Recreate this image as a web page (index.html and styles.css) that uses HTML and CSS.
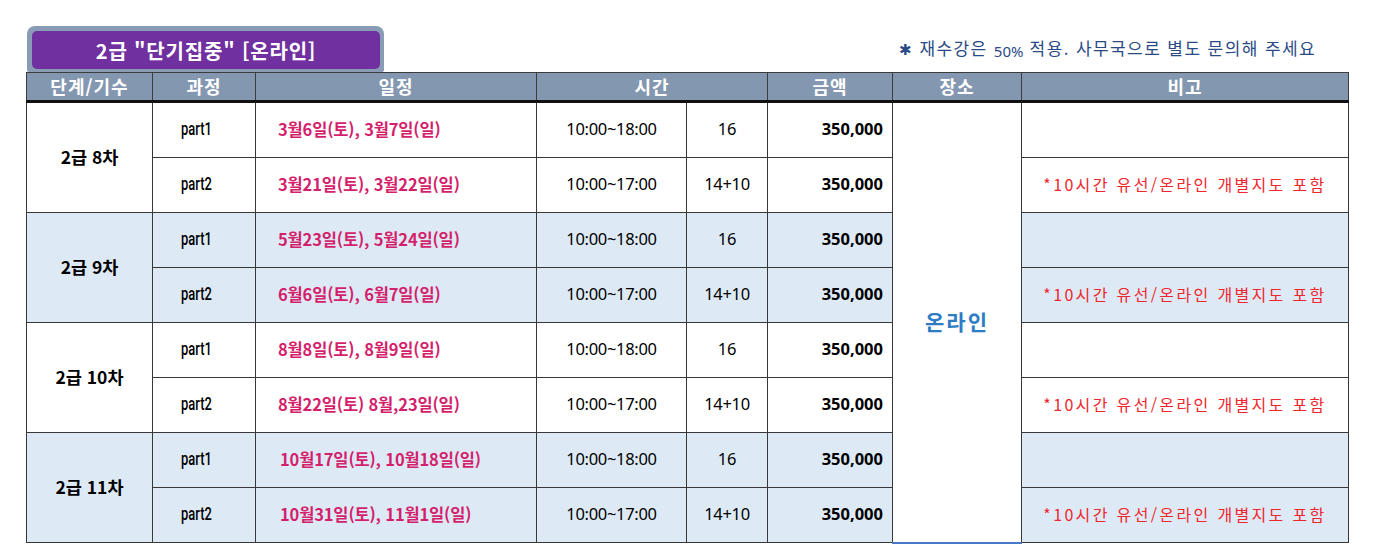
FILE: index.html
```html
<!DOCTYPE html>
<html lang="ko">
<head>
<meta charset="utf-8">
<title>2급 단기집중 온라인</title>
<link rel="stylesheet" href="styles.css">
</head>
<body>
<div class="wrap">
  <div class="topbar">
    <div class="tab"><div class="tab-inner">2급 "단기집중" [온라인]</div></div>
    <div class="note"><span class="star">✱</span> 재수강은 <span class="pct">50%</span> 적용. 사무국으로 별도 문의해 주세요</div>
  </div>
  <table class="sched">
    <colgroup>
      <col class="c1"><col class="c2"><col class="c3"><col class="c4"><col class="c5"><col class="c6"><col class="c7"><col class="c8">
    </colgroup>
    <thead>
      <tr>
        <th>단계/기수</th><th>과정</th><th>일정</th><th colspan="2">시간</th><th>금액</th><th>장소</th><th>비고</th>
      </tr>
    </thead>
    <tbody>
      <tr class="w">
        <td rowspan="2" class="grp">2급 8차</td>
        <td class="part"><span>part1</span></td>
        <td class="date">3월6일(토), 3월7일(일)</td>
        <td class="time">10:00~18:00</td>
        <td class="hrs">16</td>
        <td class="amt">350,000</td>
        <td rowspan="8" class="place">온라인</td>
        <td class="memo"></td>
      </tr>
      <tr class="w">
        <td class="part"><span>part2</span></td>
        <td class="date">3월21일(토), 3월22일(일)</td>
        <td class="time">10:00~17:00</td>
        <td class="hrs">14+10</td>
        <td class="amt">350,000</td>
        <td class="memo">*10시간 유선/온라인 개별지도 포함</td>
      </tr>
      <tr class="b">
        <td rowspan="2" class="grp">2급 9차</td>
        <td class="part"><span>part1</span></td>
        <td class="date">5월23일(토), 5월24일(일)</td>
        <td class="time">10:00~18:00</td>
        <td class="hrs">16</td>
        <td class="amt">350,000</td>
        <td class="memo"></td>
      </tr>
      <tr class="b">
        <td class="part"><span>part2</span></td>
        <td class="date">6월6일(토), 6월7일(일)</td>
        <td class="time">10:00~17:00</td>
        <td class="hrs">14+10</td>
        <td class="amt">350,000</td>
        <td class="memo">*10시간 유선/온라인 개별지도 포함</td>
      </tr>
      <tr class="w">
        <td rowspan="2" class="grp">2급 10차</td>
        <td class="part"><span>part1</span></td>
        <td class="date">8월8일(토), 8월9일(일)</td>
        <td class="time">10:00~18:00</td>
        <td class="hrs">16</td>
        <td class="amt">350,000</td>
        <td class="memo"></td>
      </tr>
      <tr class="w">
        <td class="part"><span>part2</span></td>
        <td class="date">8월22일(토) 8월,23일(일)</td>
        <td class="time">10:00~17:00</td>
        <td class="hrs">14+10</td>
        <td class="amt">350,000</td>
        <td class="memo">*10시간 유선/온라인 개별지도 포함</td>
      </tr>
      <tr class="b">
        <td rowspan="2" class="grp">2급 11차</td>
        <td class="part"><span>part1</span></td>
        <td class="date d2">10월17일(토), 10월18일(일)</td>
        <td class="time">10:00~18:00</td>
        <td class="hrs">16</td>
        <td class="amt">350,000</td>
        <td class="memo"></td>
      </tr>
      <tr class="b">
        <td class="part"><span>part2</span></td>
        <td class="date d2">10월31일(토), 11월1일(일)</td>
        <td class="time">10:00~17:00</td>
        <td class="hrs">14+10</td>
        <td class="amt">350,000</td>
        <td class="memo">*10시간 유선/온라인 개별지도 포함</td>
      </tr>
    </tbody>
  </table>
</div>
</body>
</html>
```

FILE: styles.css
```css
html, body {
  margin: 0;
  padding: 0;
  background: #ffffff;
}
body {
  font-family: "Noto Sans CJK KR", "Noto Sans", sans-serif;
  color: #000;
}
.wrap {
  padding: 26px 0 0 26px;
  width: 1322px;
}
.topbar {
  display: flex;
  justify-content: space-between;
  align-items: flex-end;
  height: 46px;
}
.tab {
  margin-left: 1px;
  width: 357px;
  height: 46px;
  box-sizing: border-box;
  background: #8a9bb5;
  border-radius: 8px 8px 2px 2px;
  padding: 5px 4px 3px 5px;
}
.tab-inner {
  height: 100%;
  background: #7030a0;
  border-radius: 5px;
  color: #ffffff;
  font-weight: 700;
  font-size: 20px;
  display: flex;
  align-items: center;
  justify-content: center;
  letter-spacing: 0.8px;
}
.note {
  align-self: flex-start;
  margin-top: 9px;
  margin-right: 32px;
  color: #2a4a86;
  font-size: 17px;
  letter-spacing: 1.4px;
  white-space: nowrap;
}
.note .star {
  font-size: 15px;
}
.note .pct {
  font-family: "Noto Sans", sans-serif;
  font-size: 15px;
  letter-spacing: 0;
  position: relative;
  top: 2px;
}
.sched {
  border-collapse: collapse;
  table-layout: fixed;
  width: 1322px;
}
.c1 { width: 126px; }
.c2 { width: 103px; }
.c3 { width: 281px; }
.c4 { width: 150px; }
.c5 { width: 81px; }
.c6 { width: 125px; }
.c7 { width: 129px; }
.c8 { width: 327px; }
.sched th {
  background: #8497b0;
  color: #ffffff;
  font-weight: 700;
  font-size: 18px;
  letter-spacing: 1px;
  height: 27px;
  padding: 0;
  border: 1px solid #3c3c3c;
  border-bottom: 3px solid #111;
  line-height: 27px;
}
.sched td {
  border: 1px solid #383838;
  height: 51px;
  padding: 0 0 3px 0;
  text-align: center;
  vertical-align: middle;
}
tr.b td { background: #ddeaf6; }
tr.w td { background: #ffffff; }
.sched td.grp {
  font-weight: 700;
  font-size: 17.5px;
}
.sched td.part {
  font-family: "Roboto", "Liberation Sans", sans-serif;
  font-weight: 500;
  font-size: 18.5px;
  text-align: left;
  padding-left: 28px;
}
.part span {
  display: inline-block;
  transform: scaleX(0.7);
  transform-origin: left center;
}
.sched td.date {
  color: #d41f6c;
  font-weight: 700;
  font-size: 16.5px;
  text-align: left;
  padding-left: 22px;
  letter-spacing: -0.15px;
}
.sched td.date.d2 { padding-left: 24px; }
.sched td.time,
.sched td.hrs {
  font-family: "Noto Sans", sans-serif;
  font-size: 16.5px;
  letter-spacing: -0.3px;
}
.sched td.amt {
  font-family: "Noto Sans", sans-serif;
  font-weight: 700;
  font-size: 16.5px;
  text-align: right;
  padding-right: 9px;
}
.sched td.place {
  background: #ffffff;
  color: #2e7cc4;
  font-weight: 700;
  font-size: 21px;
  letter-spacing: 2px;
  border-bottom: 2px solid #4a78c8;
}
.sched td.memo {
  color: #f0262e;
  font-size: 16px;
  letter-spacing: 2.35px;
}
```
